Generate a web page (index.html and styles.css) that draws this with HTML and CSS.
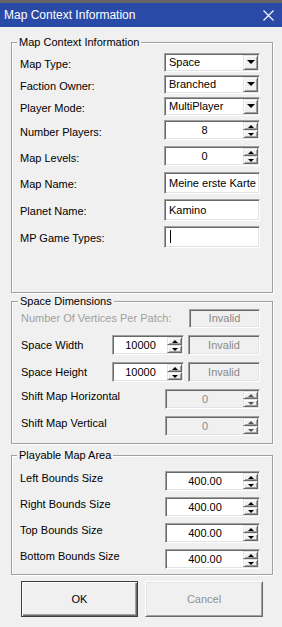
FILE: index.html
```html
<!DOCTYPE html>
<html lang="en">
<head>
  <meta charset="UTF-8">
  <title>Map Context Information</title>
  <meta name="viewport" content="width=device-width, initial-scale=1.0">
  <link rel="stylesheet" href="styles.css">
</head>
<body>
  <div class="window">
    <div class="titlebar">
      <span>Map Context Information</span>
      <svg class="close" width="11" height="11" viewBox="0 0 11 11">
        <path d="M0.5 0.5L10.5 10.5M10.5 0.5L0.5 10.5" stroke="#fff" stroke-width="1.1" fill="none"/>
      </svg>
    </div>

    <div class="dialog">
      <fieldset class="group group-main">
        <legend>Map Context Information</legend>
        <div class="row">
          <span class="label">Map Type:</span>
          <div class="field combo"><span class="text">Space</span><span class="raised drop"><i class="arrow-down"></i></span></div>
        </div>
        <div class="row">
          <span class="label">Faction Owner:</span>
          <div class="field combo"><span class="text">Branched</span><span class="raised drop"><i class="arrow-down"></i></span></div>
        </div>
        <div class="row">
          <span class="label">Player Mode:</span>
          <div class="field combo"><span class="text">MultiPlayer</span><span class="raised drop"><i class="arrow-down"></i></span></div>
        </div>
        <div class="row tall">
          <span class="label">Number Players:</span>
          <div class="field spin">
            <span class="value">8</span>
            <span class="spinner"><span class="raised"><i class="arrow-up"></i></span><span class="raised"><i class="arrow-down small"></i></span></span>
          </div>
        </div>
        <div class="row tall">
          <span class="label">Map Levels:</span>
          <div class="field spin">
            <span class="value">0</span>
            <span class="spinner"><span class="raised"><i class="arrow-up"></i></span><span class="raised"><i class="arrow-down small"></i></span></span>
          </div>
        </div>
        <div class="row taller">
          <span class="label">Map Name:</span>
          <div class="field textbox">Meine erste Karte</div>
        </div>
        <div class="row taller">
          <span class="label">Planet Name:</span>
          <div class="field textbox">Kamino</div>
        </div>
        <div class="row taller">
          <span class="label">MP Game Types:</span>
          <div class="field textbox"><span class="caret"></span></div>
        </div>
      </fieldset>

      <fieldset class="group group-space">
        <legend>Space Dimensions</legend>
        <div class="row">
          <span class="label disabled">Number Of Vertices Per Patch:</span>
          <div class="field invalid narrow">Invalid</div>
        </div>
        <div class="row">
          <span class="label">Space Width</span>
          <div class="pair">
            <div class="field spin small-spin">
              <span class="value">10000</span>
              <span class="spinner"><span class="raised"><i class="arrow-up"></i></span><span class="raised"><i class="arrow-down small"></i></span></span>
            </div>
            <div class="field invalid">Invalid</div>
          </div>
        </div>
        <div class="row">
          <span class="label">Space Height</span>
          <div class="pair">
            <div class="field spin small-spin">
              <span class="value">10000</span>
              <span class="spinner"><span class="raised"><i class="arrow-up"></i></span><span class="raised"><i class="arrow-down small"></i></span></span>
            </div>
            <div class="field invalid">Invalid</div>
          </div>
        </div>
        <div class="row">
          <span class="label label-up">Shift Map Horizontal</span>
          <div class="field spin wide-spin off">
            <span class="value">0</span>
            <span class="spinner"><span class="raised"><i class="arrow-up"></i></span><span class="raised"><i class="arrow-down small"></i></span></span>
          </div>
        </div>
        <div class="row">
          <span class="label label-up">Shift Map Vertical</span>
          <div class="field spin wide-spin off">
            <span class="value">0</span>
            <span class="spinner"><span class="raised"><i class="arrow-up"></i></span><span class="raised"><i class="arrow-down small"></i></span></span>
          </div>
        </div>
      </fieldset>

      <fieldset class="group group-bounds">
        <legend>Playable Map Area</legend>
        <div class="row">
          <span class="label">Left Bounds Size</span>
          <div class="field spin wide-spin">
            <span class="value">400.00</span>
            <span class="spinner"><span class="raised"><i class="arrow-up"></i></span><span class="raised"><i class="arrow-down small"></i></span></span>
          </div>
        </div>
        <div class="row">
          <span class="label">Right Bounds Size</span>
          <div class="field spin wide-spin">
            <span class="value">400.00</span>
            <span class="spinner"><span class="raised"><i class="arrow-up"></i></span><span class="raised"><i class="arrow-down small"></i></span></span>
          </div>
        </div>
        <div class="row">
          <span class="label">Top Bounds Size</span>
          <div class="field spin wide-spin">
            <span class="value">400.00</span>
            <span class="spinner"><span class="raised"><i class="arrow-up"></i></span><span class="raised"><i class="arrow-down small"></i></span></span>
          </div>
        </div>
        <div class="row">
          <span class="label">Bottom Bounds Size</span>
          <div class="field spin wide-spin">
            <span class="value">400.00</span>
            <span class="spinner"><span class="raised"><i class="arrow-up"></i></span><span class="raised"><i class="arrow-down small"></i></span></span>
          </div>
        </div>
      </fieldset>

      <div class="buttons">
        <button class="btn btn-default">OK</button>
        <button class="btn btn-off">Cancel</button>
      </div>
    </div>
  </div>
</body>
</html>
```

FILE: styles.css
```css
body {
  margin: 0;
  padding: 0;
  background: #f0f0f0;
  font-family: "Liberation Sans", Arial, sans-serif;
  font-size: 11px;
  color: #000;
}
.window {
  width: 282px;
  height: 627px;
  box-sizing: border-box;
  border-top: 3px solid #666;
}
.titlebar {
  height: 24px;
  background: #2a4aa8;
  color: #fff;
  font-size: 12px;
  display: flex;
  align-items: center;
  justify-content: space-between;
  padding: 0 8px 0 4px;
}
.dialog {
  padding: 9px 9px 0 11px;
}
.group {
  margin: 0;
  min-width: 0;
  border: 1px solid #a0a0a0;
  box-shadow: 1px 1px 0 #fff, inset 1px 1px 0 #fff;
}
.group legend {
  padding: 0 2px;
  margin-left: -3px;
  line-height: 13px;
  background: #f0f0f0;
}
.group-main {
  padding: 2px 12px 42px 8px;
}
.group-space {
  margin-top: 2px;
  padding: 0 12px 7px 9px;
  display: flex;
  flex-direction: column;
  gap: 7px;
}
.group-bounds {
  margin-top: 5px;
  padding: 9px 12px 5px 8px;
  display: flex;
  flex-direction: column;
  gap: 6px;
}
.row {
  display: flex;
  align-items: center;
  justify-content: space-between;
  height: 22px;
}
.row.tall {
  height: 26px;
}
.row.taller {
  height: 27px;
}
.group-space .row, .group-bounds .row {
  height: 20px;
}
.label {
  white-space: nowrap;
  line-height: 13px;
}
.group-main .label {
  margin-top: 4px;
}
.group-bounds .label {
  margin-bottom: 5px;
}
.label-up {
  margin-bottom: 6px;
}
.label.disabled {
  color: #a0a0a0;
}
.field {
  box-sizing: border-box;
  background: #fff;
  border: 1px solid;
  border-color: #a0a0a0 #fff #fff #a0a0a0;
  box-shadow: inset 1px 1px 0 #696969, inset -1px -1px 0 #e3e3e3;
  padding: 1px;
}
.raised {
  box-sizing: border-box;
  background: #f0f0f0;
  border: 1px solid;
  border-color: #e3e3e3 #696969 #696969 #e3e3e3;
  box-shadow: inset 1px 1px 0 #fff, inset -1px -1px 0 #a0a0a0;
  display: flex;
  align-items: center;
  justify-content: center;
}
.combo {
  width: 96px;
  height: 19px;
  display: flex;
}
.combo .text {
  flex: 1;
  padding-left: 3px;
  line-height: 15px;
}
.drop {
  width: 15px;
}
.arrow-down {
  width: 0;
  height: 0;
  border-left: 4px solid transparent;
  border-right: 4px solid transparent;
  border-top: 4px solid #000;
}
.arrow-down.small {
  border-left-width: 3px;
  border-right-width: 3px;
  border-top-width: 3px;
}
.arrow-up {
  width: 0;
  height: 0;
  border-left: 3px solid transparent;
  border-right: 3px solid transparent;
  border-bottom: 3px solid #000;
}
.spin {
  width: 96px;
  height: 20px;
  display: flex;
}
.spin .value {
  flex: 1;
  display: flex;
  align-items: center;
  justify-content: center;
}
.spinner {
  width: 15px;
  display: flex;
  flex-direction: column;
}
.spinner .raised {
  flex: 1;
}
.small-spin {
  width: 72px;
}
.wide-spin {
  width: 95px;
}
.off {
  background: #f0f0f0;
  color: #8a8a8a;
}
.off .arrow-up {
  border-bottom-color: #555;
}
.off .arrow-down {
  border-top-color: #555;
}
.textbox {
  width: 96px;
  height: 22px;
  padding: 1px 3px 1px 4px;
  display: flex;
  align-items: center;
  white-space: nowrap;
  overflow: hidden;
}
.caret {
  display: block;
  width: 1px;
  height: 13px;
  margin-left: 1px;
  background: #000;
}
.invalid {
  width: 72px;
  height: 20px;
  background: #f0f0f0;
  color: #8a8a8a;
  display: flex;
  align-items: center;
  justify-content: center;
}
.invalid.narrow {
  width: 71px;
  height: 19px;
}
.pair {
  display: flex;
  gap: 4px;
}
.buttons {
  display: flex;
  gap: 7px;
  margin-top: 6px;
  padding-left: 10px;
}
.btn {
  width: 117px;
  height: 36px;
  font-family: inherit;
  font-size: 11px;
  background: #f0f0f0;
  border: 1px solid;
  border-color: #fff #696969 #696969 #fff;
  box-shadow: inset 1px 1px 0 #e3e3e3, inset -1px -1px 0 #a0a0a0;
  padding: 0;
}
.btn-default {
  border-color: #3c3c3c;
  box-shadow: inset 1px 1px 0 #fff, inset -1px -1px 0 #696969, inset -2px -2px 0 #a0a0a0;
  color: #000;
}
.btn-off {
  width: 118px;
  color: #919191;
}
```
